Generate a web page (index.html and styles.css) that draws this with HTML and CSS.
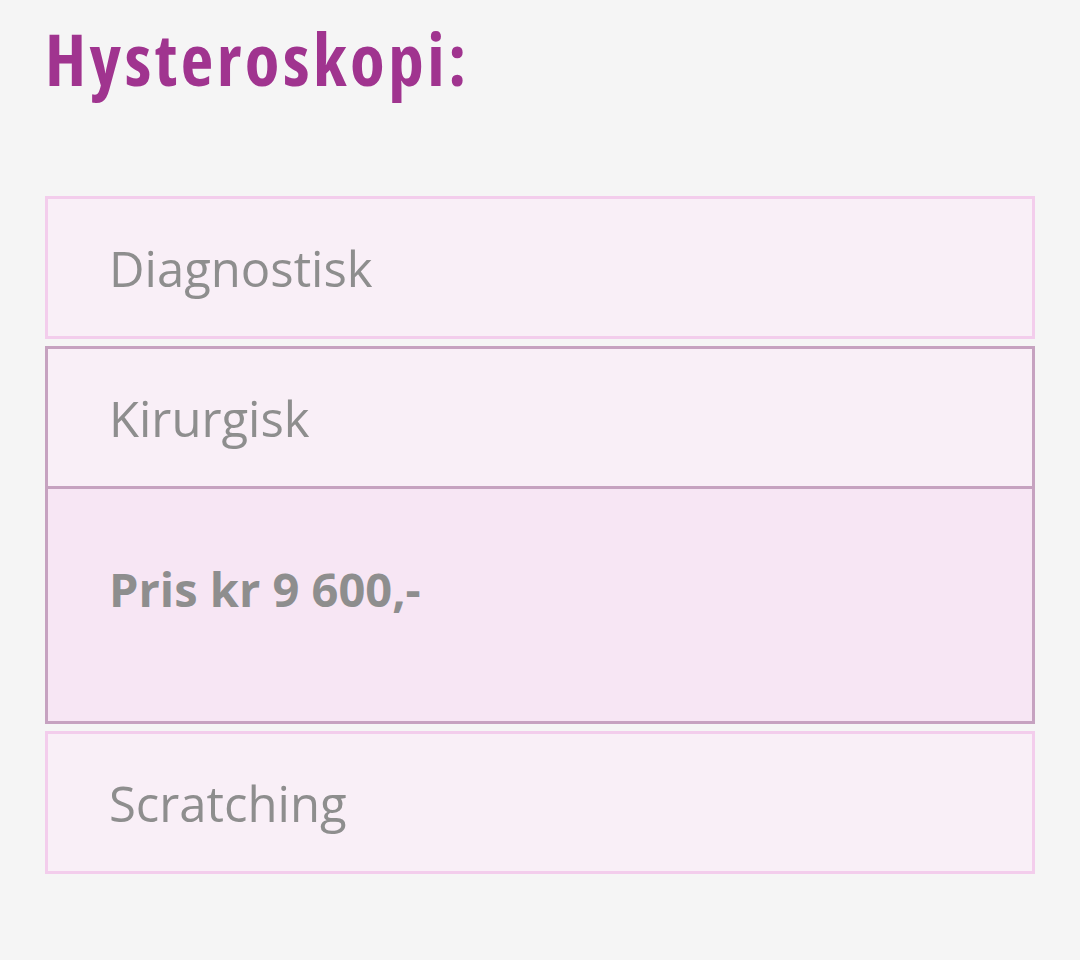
FILE: index.html
```html
<!DOCTYPE html>
<html lang="no">
<head>
    <meta charset="UTF-8">
    <meta name="viewport" content="width=device-width, initial-scale=1.0">
    <title>Hysteroskopi</title>
    <link rel="stylesheet" href="styles.css">
</head>
<body>
    <div class="page">
        <h2 class="title">Hysteroskopi:</h2>
        <div class="accordion">
            <div class="acc-item">
                <div class="acc-head">Diagnostisk</div>
            </div>
            <div class="acc-item open">
                <div class="acc-head">Kirurgisk</div>
                <div class="acc-body">
                    <p><strong>Pris kr 9 600,-</strong></p>
                </div>
            </div>
            <div class="acc-item">
                <div class="acc-head">Scratching</div>
            </div>
        </div>
    </div>
</body>
</html>
```

FILE: styles.css
```css
body {
    margin: 0;
    background-color: #f5f5f5;
    font-family: "Open Sans", "Liberation Sans", sans-serif;
}
.page {
    padding: 12px 45px 0 45px;
}
.title {
    margin: 0 0 90px 0;
    color: #a0348f;
    font-size: 71px;
    font-weight: 700;
    font-stretch: 75%;
    line-height: 94px;
    letter-spacing: 3.5px;
}
.accordion {
    display: flex;
    flex-direction: column;
    gap: 7px;
    width: 990px;
}
.acc-item {
    border: 3px solid #f3cdec;
    background-color: #f9eff7;
}
.acc-head {
    height: 137px;
    display: flex;
    align-items: center;
    padding-left: 61px;
    color: #8e8e8e;
    font-size: 49px;
}
.acc-item.open {
    border-color: #c6a2c0;
}
.acc-item.open .acc-head {
    border-bottom: 3px solid #c6a2c0;
}
.acc-body {
    background-color: #f7e6f4;
    height: 232px;
    padding-left: 61px;
    color: #8e8e8e;
    font-size: 47px;
}
.acc-body p {
    margin: 0;
    padding-top: 70px;
    line-height: 60px;
}
```
